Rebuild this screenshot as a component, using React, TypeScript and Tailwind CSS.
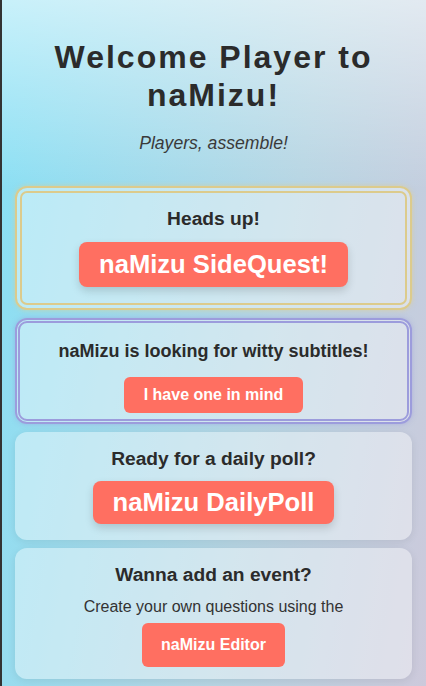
export default function App() {
  return (
    <div
      className="min-h-screen border-l-2 border-[#333] pl-[13px] pr-[14px] pb-6 font-['Liberation_Sans',Arial,sans-serif] leading-[normal] text-[#2b2b2b] bg-[linear-gradient(180deg,rgba(255,255,255,0.55)_0px,rgba(255,255,255,0)_190px),linear-gradient(100deg,#86e0f5_0%,#b6d5e3_60%,#cdc9db_100%)]"
    >
      {/* Header */}
      <h1 className="pt-[38px] text-center text-[32px] leading-[38px] font-bold tracking-[2px]">
        Welcome Player to
        <br />
        naMizu!
      </h1>
      <p className="mt-[19px] text-center text-[17.6px] leading-[normal] italic text-[#3a3a3a]">Players, assemble!</p>

      <div className="mt-[32px] flex flex-col gap-2">
        {/* Side quest */}
        <div className="rounded-xl border-[7px] border-double border-[#dccb8c] bg-white/40 px-4 pt-[15px] pb-[16px] text-center shadow-[0_0_5px_rgba(230,205,130,0.6)]">
          <h2 className="text-[19.2px] leading-[22px] font-bold">Heads up!</h2>
          <button className="mt-3 rounded-lg bg-[#ff6f61] px-5 py-2 text-[25.6px] leading-[normal] font-bold text-white shadow-[0_4px_8px_rgba(0,0,0,0.15)]">
            naMizu SideQuest!
          </button>
        </div>

        {/* Subtitles */}
        <div className="rounded-xl border-[5px] border-double border-[#9c9cdc] bg-white/40 px-4 pt-[17px] pb-[6px] text-center shadow-[0_0_5px_rgba(150,150,220,0.5)]">
          <h2 className="text-[18px] leading-[22px] font-bold">naMizu is looking for witty subtitles!</h2>
          <button className="mt-[15px] rounded-md bg-[#ff6f61] px-5 py-[9px] text-base leading-[normal] font-bold text-white">
            I have one in mind
          </button>
        </div>

        {/* Daily poll */}
        <div className="rounded-xl bg-white/40 px-4 py-4 text-center shadow-[0_2px_8px_rgba(0,0,0,0.08)]">
          <h2 className="text-[19.2px] leading-[22px] font-bold">Ready for a daily poll?</h2>
          <button className="mt-[11px] rounded-lg bg-[#ff6f61] px-5 py-[7px] text-[25.6px] leading-[normal] font-bold text-white shadow-[0_4px_8px_rgba(0,0,0,0.15)]">
            naMizu DailyPoll
          </button>
        </div>

        {/* Editor */}
        <div className="rounded-xl bg-white/40 px-4 pt-4 pb-3 text-center shadow-[0_2px_8px_rgba(0,0,0,0.08)]">
          <h2 className="text-[19.2px] leading-[22px] font-bold">Wanna add an event?</h2>
          <p className="mt-[11px] text-base leading-5 text-[#333]">Create your own questions using the</p>
          <button className="mt-[6px] rounded-md bg-[#ff6f61] px-[19px] py-[13px] text-base leading-[normal] font-bold text-white">
            naMizu Editor
          </button>
        </div>
      </div>
    </div>
  );
}
